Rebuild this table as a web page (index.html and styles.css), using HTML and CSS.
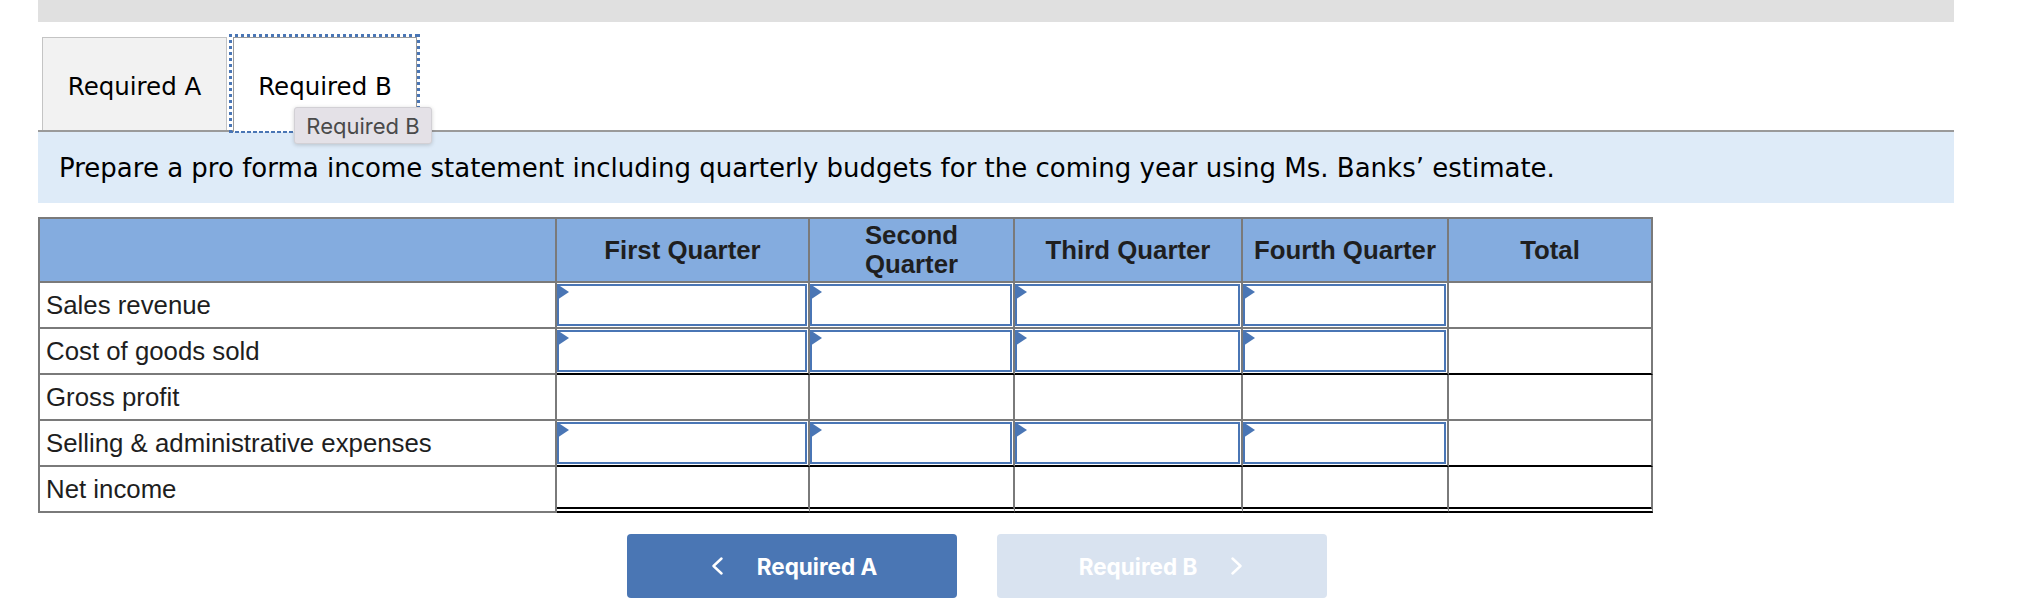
FILE: index.html
```html
<!DOCTYPE html>
<html lang="en">
<head>
<meta charset="utf-8">
<title>Required B</title>
<link rel="stylesheet" href="styles.css">
</head>
<body>
<div class="page">
  <div class="topbar"></div>
  <div class="tabs">
    <div class="tab">Required A</div>
    <div class="tab tab-active">Required B</div>
  </div>
  <div class="tooltip">Required B</div>
  <div class="instructions">Prepare a pro forma income statement including quarterly budgets for the coming year using Ms. Banks’ estimate.</div>
  <table class="budget">
    <colgroup>
      <col class="c-label"><col class="c-q1"><col class="c-q2"><col class="c-q3"><col class="c-q4"><col class="c-total">
    </colgroup>
    <thead>
      <tr>
        <th></th>
        <th>First Quarter</th>
        <th>Second<br>Quarter</th>
        <th>Third Quarter</th>
        <th>Fourth Quarter</th>
        <th>Total</th>
      </tr>
    </thead>
    <tbody>
      <tr>
        <td class="label">Sales revenue</td>
        <td class="data"><div class="input"></div></td>
        <td class="data"><div class="input"></div></td>
        <td class="data"><div class="input"></div></td>
        <td class="data"><div class="input"></div></td>
        <td class="data"></td>
      </tr>
      <tr class="underline">
        <td class="label">Cost of goods sold</td>
        <td class="data"><div class="input"></div></td>
        <td class="data"><div class="input"></div></td>
        <td class="data"><div class="input"></div></td>
        <td class="data"><div class="input"></div></td>
        <td class="data"></td>
      </tr>
      <tr>
        <td class="label">Gross profit</td>
        <td class="data"></td>
        <td class="data"></td>
        <td class="data"></td>
        <td class="data"></td>
        <td class="data"></td>
      </tr>
      <tr class="underline">
        <td class="label">Selling &amp; administrative expenses</td>
        <td class="data"><div class="input"></div></td>
        <td class="data"><div class="input"></div></td>
        <td class="data"><div class="input"></div></td>
        <td class="data"><div class="input"></div></td>
        <td class="data"></td>
      </tr>
      <tr class="double">
        <td class="label">Net income</td>
        <td class="data"></td>
        <td class="data"></td>
        <td class="data"></td>
        <td class="data"></td>
        <td class="data"></td>
      </tr>
    </tbody>
  </table>
  <div class="nav">
    <button class="nav-btn prev" type="button">
      <svg class="chev" width="12" height="18" viewBox="0 0 12 18"><polyline points="10.5,1.5 2.5,9 10.5,16.5" fill="none" stroke="#fff" stroke-width="2.4" stroke-linecap="round" stroke-linejoin="round"/></svg>
      <span>Required A</span>
    </button>
    <button class="nav-btn next" type="button">
      <span>Required B</span>
      <svg class="chev" width="12" height="18" viewBox="0 0 12 18"><polyline points="1.5,1.5 9.5,9 1.5,16.5" fill="none" stroke="#fff" stroke-width="2.4" stroke-linecap="round" stroke-linejoin="round"/></svg>
    </button>
  </div>
</div>
</body>
</html>
```
FILE: styles.css
```css
* { box-sizing: border-box; }
html, body { margin: 0; padding: 0; background: #fff; }

.page {
  position: relative;
  margin-left: 38px;
  width: 1916px;
}

.topbar {
  height: 22px;
  background: #e0e0e0;
}

.tabs {
  margin-top: 15px;
  padding-left: 4px;
  display: flex;
  align-items: flex-end;
  gap: 6px;
  border-bottom: 2px solid #9a9a9a;
}

.tab {
  width: 185px;
  height: 93px;
  display: flex;
  align-items: center;
  justify-content: center;
  padding-top: 4px;
  background: #f2f2f2;
  border: 1px solid #c4c4c4;
  border-bottom: none;
  font-family: "DejaVu Sans", Verdana, sans-serif;
  font-size: 24.5px;
  color: #000;
}

.tab-active {
  position: relative;
  width: 184px;
  height: 95px;
  margin-bottom: -2px;
  padding-top: 2px;
  background: #fff;
  border-color: #9a9a9a;
}

.tab-active::after {
  content: "";
  position: absolute;
  top: -4px;
  left: -5px;
  right: -4px;
  bottom: -1px;
  pointer-events: none;
  background:
    repeating-linear-gradient(90deg, #4a76b5 0 3px, transparent 3px 6px) left top / 100% 3px no-repeat,
    repeating-linear-gradient(90deg, #4a76b5 0 4px, transparent 4px 6px) left bottom / 100% 2px no-repeat,
    repeating-linear-gradient(180deg, #4a76b5 0 3px, transparent 3px 6px) left top / 3px 100% no-repeat,
    repeating-linear-gradient(180deg, #4a76b5 0 3px, transparent 3px 6px) right top / 3px 100% no-repeat;
}

.tooltip {
  position: absolute;
  left: 256px;
  top: 107px;
  width: 138px;
  height: 37px;
  display: flex;
  align-items: center;
  justify-content: center;
  background: #e4e1e7;
  border: 1px solid #d2d0d5;
  border-radius: 3px;
  box-shadow: 0 1px 4px rgba(0,0,0,0.18);
  font-family: Inter, "Noto Sans", sans-serif;
  font-size: 22px;
  color: #4a4a4a;
  z-index: 5;
}

.instructions {
  height: 71px;
  display: flex;
  align-items: center;
  padding-left: 21px;
  background: #deebf8;
  font-family: "DejaVu Sans", Verdana, sans-serif;
  font-size: 26px;
  color: #000;
}

.budget {
  margin-top: 14px;
  border-collapse: separate;
  border-spacing: 0;
  table-layout: fixed;
  width: 1613px;
  border-top: 2px solid #7a7a7a;
  border-left: 2px solid #7a7a7a;
  font-family: "Liberation Sans", Arial, sans-serif;
  font-size: 25.8px;
  color: #1e1e1e;
}

.c-label { width: 517px; }
.c-q1 { width: 253px; }
.c-q2 { width: 205px; }
.c-q3 { width: 228px; }
.c-q4 { width: 206px; }
.c-total { width: 204px; }

.budget th {
  height: 64px;
  padding: 0;
  background: #84acdf;
  border-right: 2px solid #7a7a7a;
  border-bottom: 2px solid #7a7a7a;
  font-weight: bold;
  line-height: 29px;
  text-align: center;
  vertical-align: middle;
  color: #1f1f1f;
}

.budget td {
  height: 46px;
  padding: 0;
  border-right: 2px solid #7a7a7a;
  border-bottom: 2px solid #7a7a7a;
  vertical-align: middle;
}

.budget td.label {
  padding-left: 6px;
  line-height: 29px;
  white-space: nowrap;
}

.underline td.data { border-bottom-color: #000; }
.double td.data { border-bottom: 6px double #000; }

.input {
  position: relative;
  height: 42px;
  margin: 1px 1px 1px 0;
  border: 2px solid #4a76b5;
  background: #fff;
}

.input::before {
  content: "";
  position: absolute;
  left: -2px;
  top: -2px;
  width: 0;
  height: 0;
  border-top: 8px solid transparent;
  border-bottom: 8px solid transparent;
  border-left: 12px solid #4a76b5;
}

.nav {
  display: flex;
  gap: 40px;
  margin-top: 21px;
  padding-left: 589px;
}

.nav-btn {
  width: 330px;
  height: 64px;
  display: flex;
  align-items: center;
  justify-content: center;
  gap: 34px;
  border: none;
  border-radius: 4px;
  padding: 0;
  font-family: Inter, "Noto Sans", sans-serif;
  font-weight: 700;
  font-size: 22.5px;
  color: #fff;
  cursor: pointer;
}

.nav-btn .chev { display: block; }

.prev { background: #4a76b4; padding-left: 4px; }
.next { background: #d9e3f0; padding-right: 2px; }
```
